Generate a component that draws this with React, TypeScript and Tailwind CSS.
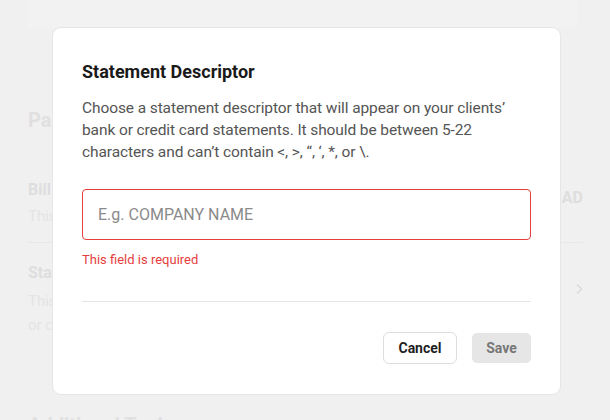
import React from "react";

export default function App() {
  return (
    <div
      className="relative w-[610px] h-[420px] overflow-hidden bg-[#f0f0f0]"
      style={{ fontFamily: "Roboto, 'Liberation Sans', sans-serif" }}
    >
      {/* faded underlying page */}
      <div className="flex flex-col">
        <div className="ml-[28px] w-[549px] h-[28px] bg-[#f2f2f2]" />
        <div className="pl-[28px] pr-[27px] flex flex-col">
          <div className="mt-[80px] w-[24px] overflow-hidden whitespace-nowrap text-[20px] leading-[24px] font-bold text-[#e0e0e0]">Pa</div>
          <div className="mt-[48px] flex justify-between items-start">
            <div className="flex flex-col w-[24px] overflow-hidden whitespace-nowrap">
              <div className="text-[16px] leading-[20px] font-bold text-[#dedede]">Bill</div>
              <div className="mt-[6px] text-[15px] leading-[20px] text-[#e4e4e4]">This</div>
            </div>
            <div className="mt-[8px] w-[23px] overflow-hidden flex justify-end whitespace-nowrap">
              <span className="text-[16px] leading-[20px] font-bold text-[#dedede]">AD</span>
            </div>
          </div>
          <div className="mt-[16px] h-px bg-[#e8e8e8]" />
          <div className="mt-[20px] flex justify-between items-start">
            <div className="flex flex-col w-[24px] overflow-hidden whitespace-nowrap">
              <div className="text-[16px] leading-[20px] font-bold text-[#dedede]">Sta</div>
              <div className="mt-[6px] text-[15px] leading-[24px] text-[#e4e4e4]">This</div>
              <div className="text-[15px] leading-[24px] text-[#e4e4e4]">or c</div>
            </div>
            <div className="mt-[20px] flex items-center text-[#dcdcdc]">
              <svg width="8" height="12" viewBox="0 0 8 12" fill="none" stroke="currentColor" strokeWidth="1.6">
                <path d="M2 1.5 L6.5 6 L2 10.5" />
              </svg>
            </div>
          </div>
          <div className="mt-[76px] text-[20px] leading-[24px] font-bold text-[#e0e0e0] whitespace-nowrap">Additional Tools</div>
        </div>
      </div>

      {/* modal */}
      <div className="absolute left-[52px] top-[27px] w-[509px] rounded-[9px] border border-[#e6e6e6] bg-white px-[29px] pt-[31px] pb-[30px] flex flex-col">
        <h2 className="text-[18px] leading-[26px] font-bold text-[#1a1a1a]">Statement Descriptor</h2>
        <p className="mt-[12px] text-[15.5px] leading-[22px] text-[#555555] tracking-[-0.1px]">
          Choose a statement descriptor that will appear on your clients’ bank or credit card statements. It should be between 5-22 characters and can’t contain &lt;, &gt;, “, ‘, *, or \.
        </p>
        <div className="mt-[26px] h-[51px] rounded-[4px] border border-[#e53e3e] flex items-center px-[15px]">
          <span className="text-[16px] text-[#8a8a8a]">E.g. COMPANY NAME</span>
        </div>
        <div className="mt-[11px] text-[13px] leading-[18px] text-[#e53e3e]">This field is required</div>
        <div className="mt-[32px] h-px bg-[#e5e5e5]" />
        <div className="mt-[30px] flex justify-end gap-[15px]">
          <button className="h-[32px] w-[74px] rounded-[6px] border border-[#dddddd] bg-white text-[14px] font-bold text-[#1f1f1f]">
            Cancel
          </button>
          <button className="mt-[1px] h-[30px] w-[59px] rounded-[5px] bg-[#e6e6e6] text-[14px] font-bold text-[#777777]">
            Save
          </button>
        </div>
      </div>
    </div>
  );
}
